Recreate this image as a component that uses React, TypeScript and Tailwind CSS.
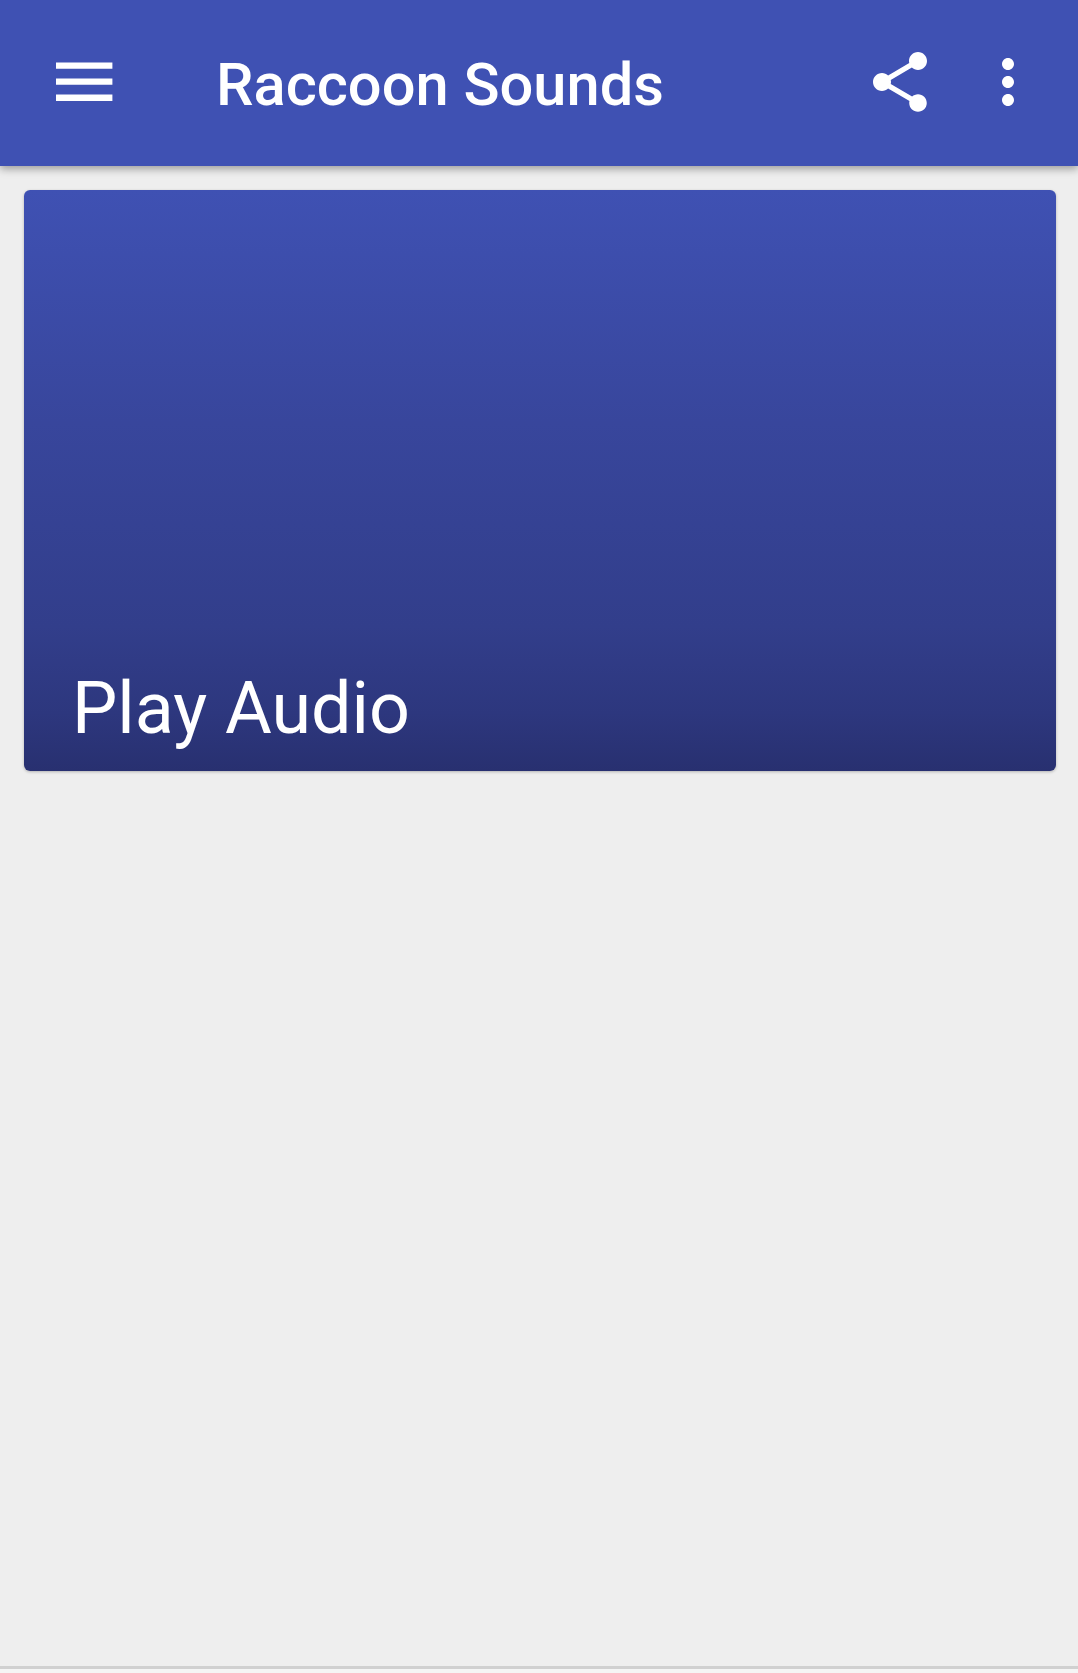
const App = () => {
  return (
    <div className="h-[1673px] bg-[#eeeeee] flex flex-col font-['Roboto',sans-serif]">
      <header className="h-[166px] shrink-0 bg-[#3f51b3] flex items-center pl-[47px] pr-[34px] pb-[3px] shadow-[0_3px_8px_rgba(0,0,0,0.35)] z-10">
        <svg className="w-[72px] h-[72px] fill-white" viewBox="0 0 24 24">
          <path d="M3 5.5h18.8v2.1H3zM3 10.85h18.8v2.1H3zM3 16.2h18.8v2.1H3z" />
        </svg>
        <h1 className="ml-[97px] mt-[8px] text-white text-[59.6px] font-medium leading-none flex-1">Raccoon Sounds</h1>
        <svg className="w-[72px] h-[72px] fill-white" viewBox="0 0 24 24">
          <path d="M18 16.08c-.76 0-1.44.3-1.96.77L8.91 12.7c.05-.23.09-.46.09-.7s-.04-.47-.09-.7l7.05-4.11c.54.5 1.25.81 2.04.81 1.66 0 3-1.34 3-3s-1.34-3-3-3-3 1.34-3 3c0 .24.04.47.09.7L8.04 9.81C7.5 9.31 6.79 9 6 9c-1.66 0-3 1.34-3 3s1.34 3 3 3c.79 0 1.5-.31 2.04-.81l7.12 4.16c-.05.21-.08.43-.08.65 0 1.61 1.31 2.92 2.92 2.92 1.61 0 2.92-1.31 2.92-2.92s-1.31-2.92-2.92-2.92z" />
        </svg>
        <svg className="ml-[36px] w-[72px] h-[72px] fill-white" viewBox="0 0 24 24">
          <path d="M12 8c1.1 0 2-.9 2-2s-.9-2-2-2-2 .9-2 2 .9 2 2 2zm0 2c-1.1 0-2 .9-2 2s.9 2 2 2 2-.9 2-2-.9-2-2-2zm0 6c-1.1 0-2 .9-2 2s.9 2 2 2 2-.9 2-2-.9-2-2-2z" />
        </svg>
      </header>

      <main className="flex-1 pt-[24px] pl-[24px] pr-[22px]">
        <div className="h-[581px] rounded-[6px] bg-[linear-gradient(180deg,#3f51b3_0%,#38469c_40%,#323e8b_75%,#2d377e_90%,#283070_100%)] shadow-[0_1px_3px_rgba(0,0,0,0.25)] flex items-end pl-[48px] pb-[26px]">
          <span className="text-white text-[71.8px] leading-none">Play Audio</span>
        </div>
      </main>

      <div className="h-[7px] shrink-0 border-t-[3px] border-[#d0d0d0] bg-[#f5f5f5]"></div>
    </div>
  )
}

export default App
